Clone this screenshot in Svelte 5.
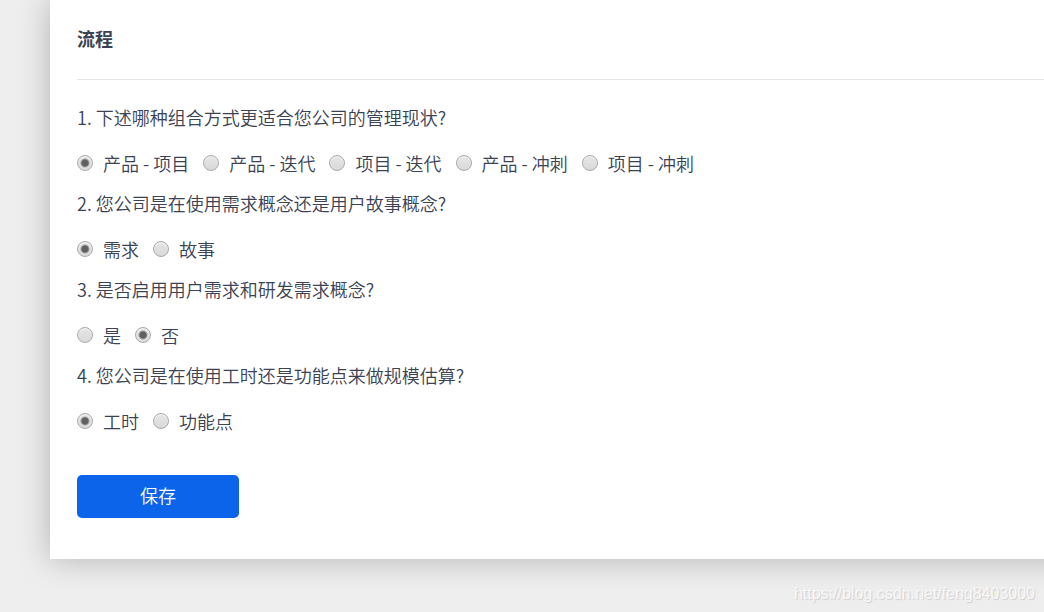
<script>
  let questions = $state([
    {
      name: 'mode',
      title: '下述哪种组合方式更适合您公司的管理现状?',
      options: ['产品 - 项目', '产品 - 迭代', '项目 - 迭代', '产品 - 冲刺', '项目 - 冲刺'],
      answer: '产品 - 项目'
    },
    {
      name: 'story',
      title: '您公司是在使用需求概念还是用户故事概念?',
      options: ['需求', '故事'],
      answer: '需求'
    },
    {
      name: 'requirement',
      title: '是否启用用户需求和研发需求概念?',
      options: ['是', '否'],
      answer: '否'
    },
    {
      name: 'estimate',
      title: '您公司是在使用工时还是功能点来做规模估算?',
      options: ['工时', '功能点'],
      answer: '工时'
    }
  ]);

  function save(event) {
    event.preventDefault();
  }
</script>

<div class="page">
  <main class="card">
    <h2>流程</h2>
    <form onsubmit={save}>
      {#each questions as question, i}
        <fieldset>
          <legend>{i + 1}. {question.title}</legend>
          <div class="options">
            {#each question.options as option}
              <label>
                <input type="radio" name={question.name} value={option} bind:group={question.answer} />
                <span>{option}</span>
              </label>
            {/each}
          </div>
        </fieldset>
      {/each}
      <button class="save-btn" type="submit">保存</button>
    </form>
  </main>
  <div class="watermark">https://blog.csdn.net/feng8403000</div>
</div>

<style>
  :global(body) {
    margin: 0;
    background-color: #eee;
  }

  .page {
    position: relative;
    min-height: 100vh;
    overflow: hidden;
    color: #3a4254;
    font-family: "Noto Sans CJK SC", "Liberation Sans", sans-serif;
    font-size: 18px;
    font-weight: 350;
    line-height: 26px;
  }

  /* the card runs on past the right edge of the window */
  .card {
    margin: 0 -40px 0 50px;
    padding: 0 40px 41px 27px;
    background-color: #fff;
    box-shadow: 0 0 30px rgba(0, 0, 0, 0.25);
  }

  h2 {
    margin: 0 0 24px;
    padding: 25px 0 28px;
    border-bottom: 1px solid #e5e5e5;
    font-size: 18px;
    font-weight: 700;
  }

  fieldset {
    margin: 0;
    padding: 0 0 14px;
    border: none;
  }

  legend {
    padding: 0;
  }

  .options {
    display: flex;
    flex-wrap: wrap;
    gap: 14px;
    padding-top: 20px;
  }

  label {
    display: flex;
    align-items: center;
    gap: 10px;
    cursor: pointer;
  }

  input[type="radio"] {
    appearance: none;
    box-sizing: border-box;
    width: 16px;
    height: 16px;
    margin: 0;
    border: 1px solid #a9a9a9;
    border-radius: 50%;
    background: linear-gradient(#e6e6e6, #d9d9d9);
    box-shadow: inset 0 1px 1px #f5f5f5;
  }

  input[type="radio"]:checked {
    background: radial-gradient(circle, #606060 3px, transparent 5px), linear-gradient(#e6e6e6, #dcdcdc);
  }

  .save-btn {
    display: block;
    width: 162px;
    margin-top: 27px;
    padding: 7px 12px 10px;
    border: none;
    border-radius: 5px;
    background-color: #0c64eb;
    color: #fff;
    font: inherit;
    cursor: pointer;
  }

  .save-btn:hover {
    background-color: #0a56cb;
  }

  .watermark {
    position: absolute;
    right: 9px;
    bottom: 5px;
    color: #f8f8f8;
    font-family: "Liberation Sans", sans-serif;
    font-size: 16px;
    font-weight: 400;
    text-shadow: 1px 1px 1px #ccc;
  }
</style>
